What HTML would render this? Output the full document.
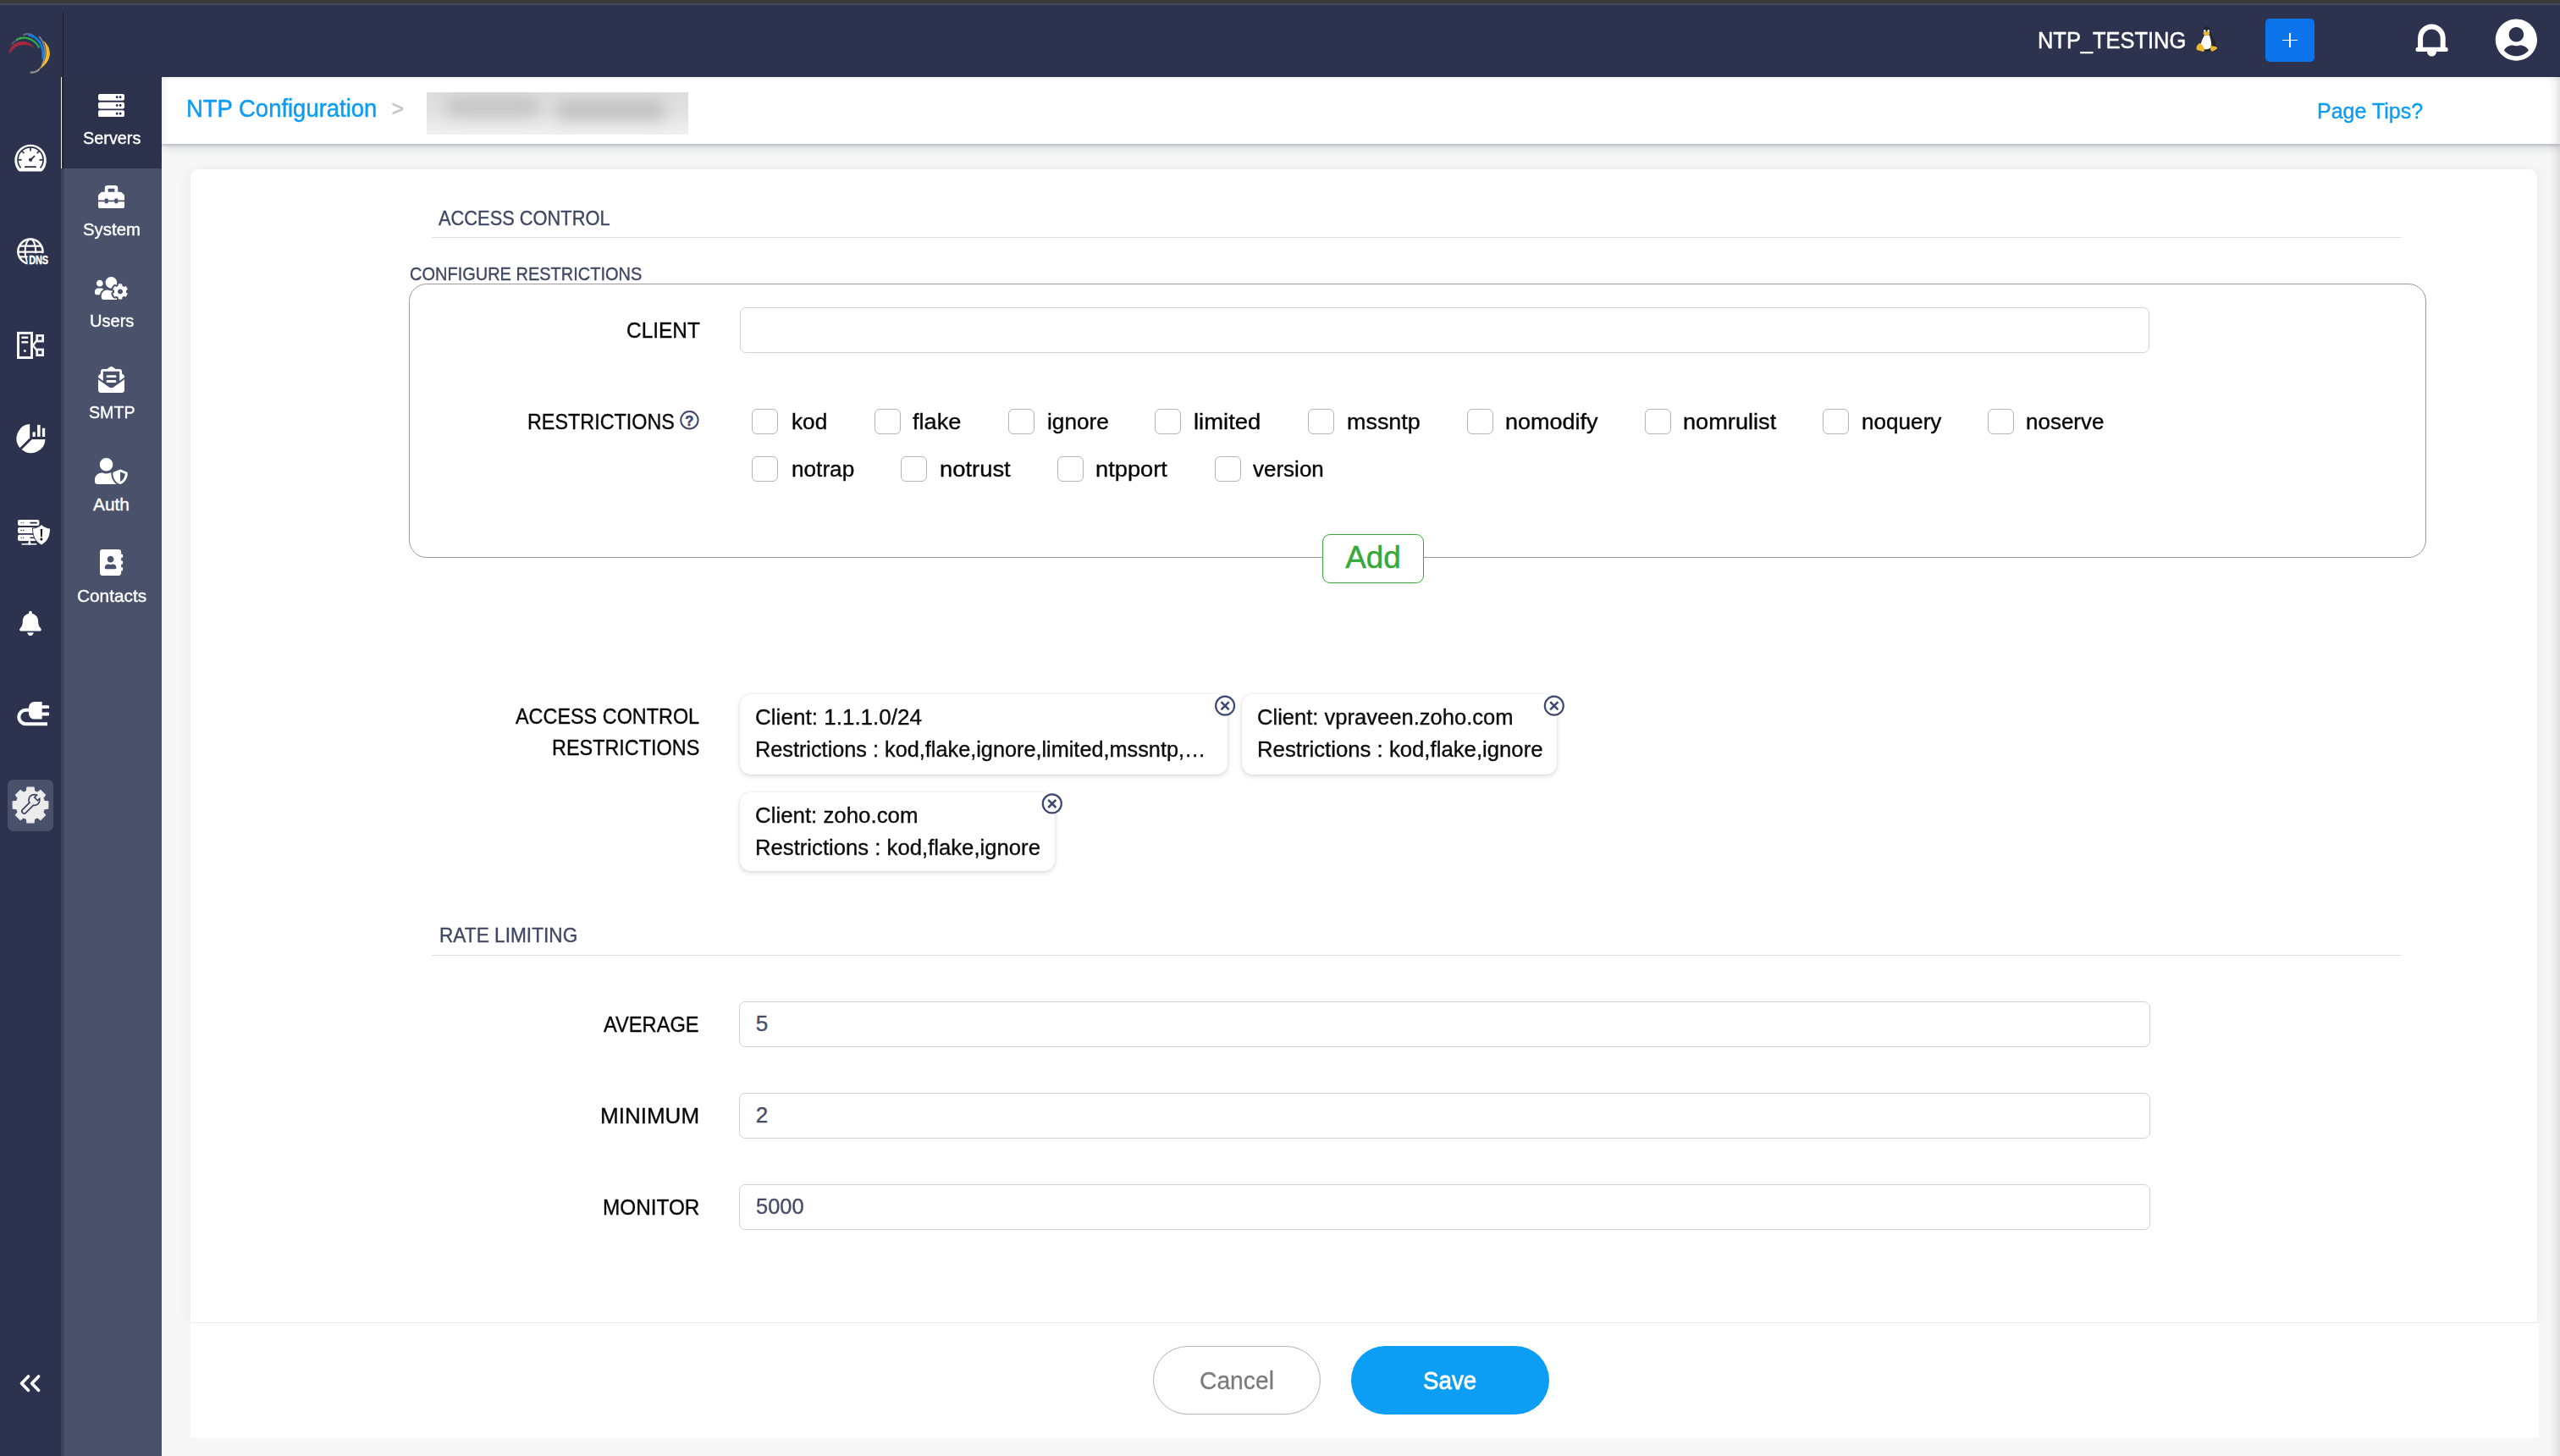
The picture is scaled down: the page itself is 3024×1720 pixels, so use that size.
<!DOCTYPE html>
<html lang="en"><head><meta charset="utf-8"><title>NTP Configuration</title>
<style>
html,body{margin:0;padding:0}
body{width:3024px;height:1720px;position:relative;overflow:hidden;background:#f7f7f7;font-family:"Liberation Sans",sans-serif}
.a{position:absolute;box-sizing:border-box}
.t{position:absolute;white-space:pre;transform-origin:0 50%;font-family:"Liberation Sans",sans-serif}
svg{position:absolute;overflow:visible}
.cb{position:absolute;box-sizing:border-box;width:31px;height:30px;border:1.5px solid #b5b5b5;border-radius:6px;background:#fff}
.inp{position:absolute;box-sizing:border-box;border:1.5px solid #cfd2db;border-radius:7px;background:#fff}
.card{position:absolute;box-sizing:border-box;background:#fff;border-radius:13px;box-shadow:0 2px 6px rgba(0,0,0,.14),0 0 2px rgba(0,0,0,.10)}

</style></head>
<body>
<!-- top strips -->
<div class="a" style="left:0;top:0;width:3024px;height:91px;background:#2d334e"></div>
<div class="a" style="left:0;top:0;width:3024px;height:4px;background:#3a3a3a"></div>
<div class="a" style="left:0;top:4px;width:3024px;height:2px;background:#434757"></div>
<!-- breadcrumb bar -->
<div class="a" id="crumb" style="left:191px;top:91px;width:2833px;height:79px;background:#fff;box-shadow:0 2px 3px rgba(70,80,100,.26),0 6px 10px rgba(60,70,90,.14)"></div>
<div class="a" id="blur" style="left:504px;top:109px;width:309px;height:49.5px;background:linear-gradient(180deg,#dddddd 0%,#e1e1e1 45%,#f1f1f1 100%);overflow:hidden">
  <div class="a" style="left:22px;top:6px;width:112px;height:22px;background:#c3c3c3;filter:blur(9px);border-radius:10px"></div>
  <div class="a" style="left:152px;top:10px;width:130px;height:22px;background:#bebebe;filter:blur(9px);border-radius:10px"></div>
</div>
<div class="a" style="left:191px;top:91px;width:2833px;height:6px;background:linear-gradient(180deg,rgba(0,0,0,.045),rgba(0,0,0,0))"></div>
<div class="a" style="left:191px;top:91px;width:10px;height:79px;background:linear-gradient(90deg,rgba(0,0,0,.04),rgba(0,0,0,0))"></div>
<div class="a" id="redge" style="left:3011px;top:91px;width:13px;height:1629px;background:linear-gradient(90deg,rgba(0,0,0,0),rgba(0,0,0,.035) 45%,rgba(0,0,0,.10))"></div>
<!-- left sidebar -->
<div class="a" id="sb1" style="left:0;top:91px;width:72px;height:1629px;background:#2d334e"></div>
<!-- secondary sidebar -->
<div class="a" id="sb2" style="left:72px;top:91px;width:119px;height:1629px;background:#4a516b"></div>
<div class="a" style="left:72px;top:199px;width:4px;height:1521px;background:linear-gradient(90deg,#3f4354 0,#3f4354 50%,#474d66 100%)"></div>
<div class="a" id="sbact" style="left:72px;top:91px;width:119px;height:108px;background:#2c324c"></div>
<div class="a" style="left:72px;top:91px;width:1.3px;height:108px;background:#ececf0"></div>
<div class="a" style="left:73.7px;top:15px;width:0;height:184px;border-left:1.3px dotted #0a0c14"></div>
<!-- card -->
<div class="a" id="card" style="left:225px;top:200px;width:2772px;height:1363px;background:#fff;border-radius:9px 9px 0 0;box-shadow:-6px 0 14px rgba(0,0,0,.035),6px 0 14px rgba(0,0,0,.035)"></div>
<div class="a" id="foot" style="left:225px;top:1562px;width:2774px;height:136px;background:#fff;border-top:1.5px solid #ebebeb"></div>
<!-- section lines -->
<div class="a" style="left:510px;top:279.5px;width:2327px;height:1.5px;background:#e2e2e2"></div>
<div class="a" style="left:510px;top:1127.5px;width:2327px;height:1.5px;background:#e2e2e2"></div>
<!-- fieldset -->
<div class="a" id="fs" style="left:483px;top:335px;width:2382.5px;height:324px;border:1.5px solid #9a9a9a;border-radius:21px"></div>
<div class="inp" style="left:873.5px;top:362.5px;width:1665.5px;height:54.5px"></div>
<!-- add button -->
<div class="a" id="add" style="left:1562px;top:631px;width:120px;height:58px;background:#fff;border:1.5px solid #38ab3d;border-radius:9px"></div>
<!-- rate inputs -->
<div class="inp" style="left:873px;top:1183px;width:1666.5px;height:54px"></div>
<div class="inp" style="left:873px;top:1291px;width:1666.5px;height:54px"></div>
<div class="inp" style="left:873px;top:1399px;width:1666.5px;height:54px"></div>
<!-- ACL cards -->
<div class="card" style="left:873.5px;top:819.5px;width:576.5px;height:95px"></div>
<div class="card" style="left:1466.5px;top:819.5px;width:372.5px;height:95px"></div>
<div class="card" style="left:873.5px;top:936px;width:372.5px;height:93px"></div>
<!-- buttons -->
<div class="a" id="cancel" style="left:1362px;top:1590px;width:198px;height:81px;border:1.5px solid #b3b3b3;border-radius:41px;background:#fff"></div>
<div class="a" id="save" style="left:1596px;top:1590px;width:234px;height:81px;border-radius:41px;background:#0c9df4"></div>
<!-- plus button -->
<div class="a" id="plus" style="left:2676px;top:22px;width:58px;height:51px;border-radius:5px;background:#0b74ea"></div>
<div class="a" style="left:2704px;top:39px;width:2.2px;height:17px;background:#fff"></div>
<div class="a" style="left:2696px;top:46.9px;width:18px;height:1.3px;background:#fff"></div>
<!-- active gear square -->
<div class="a" style="left:9px;top:921px;width:54px;height:61px;border-radius:7px;background:#4a516b"></div>
<div class="cb" style="left:888px;top:482.8px"></div>
<div class="cb" style="left:1033px;top:482.8px"></div>
<div class="cb" style="left:1191px;top:482.8px"></div>
<div class="cb" style="left:1364.4px;top:482.8px"></div>
<div class="cb" style="left:1545px;top:482.8px"></div>
<div class="cb" style="left:1733px;top:482.8px"></div>
<div class="cb" style="left:1943px;top:482.8px"></div>
<div class="cb" style="left:2153px;top:482.8px"></div>
<div class="cb" style="left:2348px;top:482.8px"></div>
<div class="cb" style="left:888px;top:538.8px"></div>
<div class="cb" style="left:1064.4px;top:538.8px"></div>
<div class="cb" style="left:1249.4px;top:538.8px"></div>
<div class="cb" style="left:1435.3px;top:538.8px"></div>
<!-- ===== secondary sidebar icons (FontAwesome-like) ===== -->
<svg style="left:116.2px;top:109.1px" width="31" height="31" viewBox="0 0 512 512" fill="#fff"><path d="M480 160H32c-17.673 0-32-14.327-32-32V64c0-17.673 14.327-32 32-32h448c17.673 0 32 14.327 32 32v64c0 17.673-14.327 32-32 32zm-48-88c-13.255 0-24 10.745-24 24s10.745 24 24 24 24-10.745 24-24-10.745-24-24-24zm-64 0c-13.255 0-24 10.745-24 24s10.745 24 24 24 24-10.745 24-24-10.745-24-24-24zm112 248H32c-17.673 0-32-14.327-32-32v-64c0-17.673 14.327-32 32-32h448c17.673 0 32 14.327 32 32v64c0 17.673-14.327 32-32 32zm-48-88c-13.255 0-24 10.745-24 24s10.745 24 24 24 24-10.745 24-24-10.745-24-24-24zm-64 0c-13.255 0-24 10.745-24 24s10.745 24 24 24 24-10.745 24-24-10.745-24-24-24zm112 248H32c-17.673 0-32-14.327-32-32v-64c0-17.673 14.327-32 32-32h448c17.673 0 32 14.327 32 32v64c0 17.673-14.327 32-32 32zm-48-88c-13.255 0-24 10.745-24 24s10.745 24 24 24 24-10.745 24-24-10.745-24-24-24zm-64 0c-13.255 0-24 10.745-24 24s10.745 24 24 24 24-10.745 24-24-10.745-24-24-24z"/></svg>
<svg style="left:116.2px;top:217.1px" width="31" height="31" viewBox="0 0 512 512" fill="#fff"><path d="M502.63 214.63l-45.250-45.250c-6-6-14.140-9.370-22.630-9.370H384V80c0-26.510-21.490-48-48-48H176c-26.510 0-48 21.490-48 48v80H77.250c-8.490 0-16.620 3.370-22.630 9.370L9.370 214.630c-6 6-9.370 14.140-9.370 22.630V320h128v-16c0-8.840 7.160-16 16-16h32c8.840 0 16 7.160 16 16v16h128v-16c0-8.840 7.160-16 16-16h32c8.840 0 16 7.160 16 16v16h128v-82.750c0-8.480-3.370-16.620-9.370-22.620zM320 160H192V96h128v64zm64 208c0 8.840-7.160 16-16 16h-32c-8.840 0-16-7.160-16-16v-16H192v16c0 8.840-7.160 16-16 16h-32c-8.840 0-16-7.160-16-16v-16H0v96c0 17.670 14.330 32 32 32h448c17.670 0 32-14.330 32-32v-96H384v16z"/></svg>
<svg style="left:112.4px;top:325.1px" width="38.75" height="31" viewBox="0 0 640 512" fill="#fff"><path d="M610.5 341.3c2.600-14.100 2.600-28.500 0-42.600l25.800-14.900c3-1.700 4.300-5.200 3.300-8.500-6.700-21.600-18.200-41.200-33.200-57.400-2.300-2.500-6-3.100-9-1.400l-25.800 14.900c-10.900-9.300-23.400-16.500-36.900-21.300v-29.800c0-3.400-2.400-6.400-5.700-7.100-22.300-5-45-4.800-66.200 0-3.300.7-5.700 3.700-5.700 7.100v29.800c-13.500 4.800-26 12-36.900 21.300l-25.800-14.900c-2.900-1.700-6.700-1.100-9 1.400-15 16.200-26.500 35.800-33.200 57.400-1 3.300.4 6.800 3.300 8.500l25.800 14.900c-2.600 14.100-2.600 28.500 0 42.600l-25.800 14.900c-3 1.700-4.300 5.200-3.300 8.500 6.700 21.600 18.200 41.100 33.200 57.400 2.300 2.500 6 3.100 9 1.400l25.800-14.900c10.900 9.300 23.400 16.500 36.900 21.300v29.800c0 3.400 2.400 6.400 5.700 7.100 22.300 5 45 4.800 66.200 0 3.300-.7 5.700-3.700 5.700-7.100v-29.800c13.500-4.800 26-12 36.900-21.300l25.800 14.900c2.900 1.700 6.700 1.100 9-1.400 15-16.200 26.500-35.800 33.200-57.400 1-3.300-.4-6.800-3.300-8.500l-25.800-14.900zM496 368.500c-26.800 0-48.500-21.800-48.500-48.500s21.800-48.500 48.500-48.500 48.500 21.800 48.500 48.500-21.700 48.500-48.500 48.500zM96 224c35.300 0 64-28.700 64-64s-28.700-64-64-64-64 28.700-64 64 28.700 64 64 64zm224 32c1.900 0 3.700-.5 5.600-.6 8.300-21.700 20.500-42.100 36.300-59.200 7.400-8 17.900-12.600 28.900-12.600 6.900 0 13.700 1.800 19.600 5.300l7.900 4.600c.8-.5 1.600-.9 2.400-1.400 7-14.600 11.200-30.800 11.200-48 0-61.900-50.100-112-112-112S208 82.100 208 144c0 61.900 50.100 112 112 112zm105.200 194.500c-2.300-1.200-4.600-2.600-6.800-3.900-8.200 4.800-15.300 9.800-27.500 9.800-10.900 0-21.400-4.600-28.900-12.600-18.300-19.800-32.300-43.900-40.200-69.600-10.700-34.500 24.900-49.700 25.800-50.300-.1-2.600-.1-5.200 0-7.800l-7.900-4.600c-3.800-2.200-7-5-9.800-8.100-3.300.2-6.500.6-9.800.6-24.600 0-47.600-6-68.500-16h-8.300C179.600 288 128 339.600 128 403.200V432c0 26.500 21.500 48 48 48h255.400c-3.700-6-6.200-12.800-6.200-20.300v-9.200zM173.100 274.600C161.500 263.100 145.600 256 128 256H64c-35.300 0-64 28.700-64 64v32c0 17.700 14.300 32 32 32h65.900c6.300-47.400 34.900-87.300 75.200-109.400z"/></svg>
<svg style="left:116.2px;top:433.1px" width="31" height="31" viewBox="0 0 512 512" fill="#fff"><path d="M176 216h160c8.840 0 16-7.160 16-16v-16c0-8.840-7.160-16-16-16H176c-8.840 0-16 7.160-16 16v16c0 8.840 7.160 16 16 16zm-16 80c0 8.840 7.160 16 16 16h160c8.840 0 16-7.160 16-16v-16c0-8.840-7.160-16-16-16H176c-8.840 0-16 7.160-16 16v16zm96 121.130c-16.420 0-32.840-5.060-46.860-15.190L0 250.860V464c0 26.510 21.490 48 48 48h416c26.510 0 48-21.490 48-48V250.860L302.860 401.940c-14.020 10.120-30.440 15.190-46.860 15.190zm237.610-254.180c-8.850-6.940-17.240-13.470-29.610-22.810V96c0-26.510-21.490-48-48-48h-77.550c-3.040-2.200-5.870-4.260-9.040-6.560C312.600 29.170 279.200-.35 256 0c-23.200-.35-56.590 29.170-73.410 41.440-3.170 2.300-6 4.360-9.040 6.560H96c-26.510 0-48 21.490-48 48v44.140c-12.370 9.330-20.760 15.870-29.610 22.810A47.995 47.995 0 0 0 0 200.720v10.650l96 69.350V96h320v184.720l96-69.350v-10.650c0-14.740-6.780-28.670-18.390-37.770z"/></svg>
<svg style="left:112.4px;top:541.1px" width="38.75" height="31" viewBox="0 0 640 512" fill="#fff"><path d="M622.3 271.1l-115.200-45c-4.100-1.600-12.600-3.700-22.200 0l-115.200 45c-10.700 4.200-17.700 14-17.700 24.900 0 111.600 68.700 188.800 132.900 213.900 9.600 3.700 18 1.600 22.200 0C558.400 489.900 640 420.500 640 296c0-10.900-7-20.700-17.700-24.900zM496 462.400V273.300l95.500 37.300c-5.600 87.100-60.900 135.400-95.500 151.800zM224 256c70.700 0 128-57.300 128-128S294.700 0 224 0 96 57.300 96 128s57.300 128 128 128zm96 40c0-2.500.8-4.800 1.100-7.200-2.500-.1-4.900-.8-7.500-.8h-16.700c-22.200 10.200-46.900 16-72.900 16s-50.600-5.800-72.900-16h-16.700C60.200 288 0 348.200 0 422.400V464c0 26.500 21.500 48 48 48h352c6.800 0 13.300-1.500 19.200-4-54-42.900-99.200-116.700-99.200-212z"/></svg>
<svg style="left:118.1px;top:649.1px" width="27.1" height="31" viewBox="0 0 448 512" fill="#fff"><path d="M436 160c6.600 0 12-5.400 12-12v-40c0-6.600-5.400-12-12-12h-20V48c0-26.500-21.500-48-48-48H48C21.500 0 0 21.500 0 48v416c0 26.500 21.500 48 48 48h320c26.500 0 48-21.500 48-48v-48h20c6.600 0 12-5.400 12-12v-40c0-6.600-5.400-12-12-12h-20v-64h20c6.600 0 12-5.400 12-12v-40c0-6.600-5.400-12-12-12h-20v-64h20zm-228-32c35.300 0 64 28.700 64 64s-28.700 64-64 64-64-28.700-64-64 28.700-64 64-64zm112 236.800c0 10.600-10 19.200-22.400 19.200H118.400C106 384 96 375.400 96 364.800v-19.200c0-31.800 30.100-57.600 67.200-57.600h5c12.300 5.100 25.700 8 39.800 8s27.600-2.900 39.800-8h5c37.100 0 67.200 25.800 67.200 57.600v19.200z"/></svg>
<svg style="left:0;top:0" width="3024" height="1720" viewBox="0 0 3024 1720">
<g id="logo" fill="none" stroke-linecap="round">
<path d="M28,41 C32,39.4 36,39.8 38.5,41.5" stroke="#646a84" stroke-width="2"/>
<path d="M14,52 C18,47.5 23,45.5 28,45" stroke="#5d6279" stroke-width="1.6"/>
<path d="M46.5,43.5 C53,51 56,63 49.5,77" stroke="#8d91a2" stroke-width="1.6"/>
<path d="M36.5,85.6 C40,85.8 43,84.8 46,82.4" stroke="#8f8f93" stroke-width="2.2"/>
<path d="M10.5,62 C13,48 31,43.5 41.5,57 C32,50.5 18,51.5 12.5,62.5 Z" fill="#a3293d" stroke="none"/>
<path d="M19.8,46.8 C27,42.6 39,44 46,55.7" stroke="#2db83d" stroke-width="2"/>
<path d="M34.3,41.5 C45,43.5 52.5,54 50.6,69" stroke="#0d80f2" stroke-width="2.6"/>
<path d="M51,48 C62,56 63,74 44,83 C56,74 57,58 51,48 Z" fill="#f2bb2e" stroke="none"/>
</g>
<g id="dash">
<path d="M24.5,202.6 Q21.5,202.6 20.2,199.5 A18.75 18.75 0 1 1 51.9,199.5 Q50.5,202.6 47.5,202.6 Z" fill="#fff"/>
<g fill="none" stroke="#2d334e" stroke-width="1.7">
<path d="M24.5,198.4 A15 15 0 1 1 47.6,198.4"/>
<path d="M36.05,174.2 V178.4 M21.3,188.8 H25.6 M46.5,188.8 H50.8 M25.45,178.2 L28.4,181.1 M46.65,178.2 L43.7,181.1 M29,197.2 H42.8"/>
<path d="M36.05,188.8 L41,184.1" stroke-width="1.8"/>
</g>
<circle cx="36.05" cy="188.8" r="2.1" fill="#2d334e"/>
</g>
<g id="dns">
<g fill="none" stroke="#fff">
<circle cx="35.9" cy="297.1" r="14.6" stroke-width="2.5"/>
<ellipse cx="35.9" cy="297.1" rx="6.3" ry="14.6" stroke-width="2.1"/>
<path d="M23.5,290.7 H48.3 M21.3,297.7 H50.5 M23,303.4 H48.8" stroke-width="2.3"/>
</g>
<rect x="32.6" y="299.2" width="28" height="16" fill="#2d334e"/>
<text x="34.2" y="311.7" font-family="Liberation Sans, sans-serif" font-weight="bold" font-size="14.3" fill="#fff" stroke="#fff" stroke-width="0.5" textLength="22.9" lengthAdjust="spacingAndGlyphs">DNS</text>
</g>
<g id="net" fill="none" stroke="#f4f4f4">
<rect x="21.5" y="393.4" width="16" height="29.1" stroke-width="3"/>
<rect x="43.7" y="396.4" width="6.9" height="6.6" stroke-width="2.8"/>
<rect x="43.7" y="413" width="6.9" height="6.6" stroke-width="2.8"/>
<path d="M39,408 L43.5,402 M39,408 L43.5,414" stroke-width="2.2"/>
<path d="M25.4,398.8 H33.2 M25.4,404.2 H33.2" stroke-width="2.4"/>
<circle cx="29.4" cy="414.5" r="1.5" fill="#f4f4f4" stroke="none"/>
</g>
<g id="pie" fill="#fff">
<path d="M35.2,517.3 L35.2,501.05 A17 17 0 0 0 23.6,529 Z"/>
<path d="M37.8,519 L53.5,519 A17 17 0 0 1 25.6,531.1 Z"/>
<rect x="38.5" y="510.3" width="3.3" height="5.6"/><rect x="44.1" y="501.9" width="3.5" height="14"/><rect x="49.9" y="505.8" width="3.3" height="10.1"/>
</g>
<g id="srvsh">
<g fill="#fff"><rect x="21" y="614.1" width="25.4" height="7" rx="2"/><rect x="21" y="623" width="25.4" height="7" rx="2"/><rect x="21" y="631.8" width="25.4" height="7.1" rx="2"/>
<rect x="33.8" y="638.5" width="2" height="4.5"/><rect x="25.6" y="642" width="17.7" height="1.6"/><circle cx="34.8" cy="642" r="1.7"/></g>
<g fill="#2d334e"><circle cx="25" cy="617.6" r=".7"/><circle cx="27.6" cy="617.6" r=".7"/><rect x="35.2" y="616.8" width="8.8" height="1.6" rx=".8"/>
<circle cx="25" cy="626.5" r=".8"/><circle cx="27.8" cy="626.5" r=".8"/>
<circle cx="25" cy="635.3" r=".7"/><circle cx="27.6" cy="635.3" r=".7"/><rect x="35.2" y="634.5" width="8.8" height="1.6" rx=".8"/></g>
<path d="M49,620 C46,623 42,624.4 39,624.5 C39,634 42.5,640 49,643.4 C55.5,640 59,634 59,624.5 C56,624.4 52,623 49,620 Z" fill="#fff" stroke="#2d334e" stroke-width="2" paint-order="stroke"/>
<path d="M47.7,625 H50.1 L49.6,634.6 H48.2 Z" fill="#000"/><circle cx="48.9" cy="637" r="1.5" fill="#000"/>
</g>
<svg x="23.1" y="721.7" width="25.7" height="29.3" viewBox="0 0 448 512"><path fill="#fff" d="M224 512c35.32 0 63.97-28.65 63.97-64H160.030c0 35.350 28.650 64 63.970 64zm215.390-149.710c-19.320-20.760-55.470-51.990-55.470-154.290 0-77.700-54.480-139.900-127.940-155.160V32c0-17.670-14.320-32-31.980-32s-31.980 14.330-31.980 32v20.840C118.560 68.100 64.080 130.300 64.080 208c0 102.300-36.150 133.530-55.470 154.290-6 6.450-8.660 14.160-8.610 21.710.110 16.400 12.980 32 32.100 32h383.800c19.120 0 32-15.600 32.100-32 .050-7.550-2.610-15.270-8.610-21.710z"/></svg>
<g id="plug" fill="#fff">
<path d="M49.7,829 H40.5 A6.5 6.5 0 0 0 34,835.5 V843.1 A6.5 6.5 0 0 0 40.5,849.6 H49.7 Z"/>
<rect x="49" y="833.2" width="9.1" height="3.9" rx="1.4"/><rect x="49" y="841.5" width="9.1" height="3.9" rx="1.4"/>
<path d="M34.5,838.8 H30.5 A8.2 8.2 0 0 0 30.5,855.2 H56" fill="none" stroke="#fff" stroke-width="4.1"/>
</g>
<g id="gear">
<path d="M40.54,934.62 L40.05,930.19 L31.95,930.19 L31.46,934.62 L27.63,936.20 L24.15,933.42 L18.42,939.15 L21.20,942.63 L19.62,946.46 L15.19,946.95 L15.19,955.05 L19.62,955.54 L21.20,959.37 L18.42,962.85 L24.15,968.58 L27.63,965.80 L31.46,967.38 L31.95,971.81 L40.05,971.81 L40.54,967.38 L44.37,965.80 L47.85,968.58 L53.58,962.85 L50.80,959.37 L52.38,955.54 L56.81,955.05 L56.81,946.95 L52.38,946.46 L50.80,942.63 L53.58,939.15 L47.85,933.42 L44.37,936.20 Z" fill="#ececec" stroke="#ececec" stroke-width="1.2" stroke-linejoin="round"/>
<clipPath id="hd"><circle cx="40.4" cy="945.0" r="7.3"/></clipPath>
<g stroke-linecap="round" fill="none">
<path d="M28.6,958.2 L37.6,949.2" stroke="#3d4560" stroke-width="7.2"/>
<circle cx="40.4" cy="945.0" r="5.6" fill="#3d4560" stroke="#3d4560" stroke-width="3.4"/>
<path d="M28.6,958.2 L37.6,949.2" stroke="#ececec" stroke-width="3.7"/>
<circle cx="40.4" cy="945.0" r="5.6" fill="#ececec" stroke="none"/>
<path d="M42.0,944.4 L48.4,938.0" stroke="#3d4560" stroke-width="7" stroke-linecap="butt" clip-path="url(#hd)"/>
<path d="M43.199999999999996,943.2 L49.4,937.0" stroke="#ececec" stroke-width="3.5" stroke-linecap="butt"/>
</g>
</g>
<path d="M33.5,1626 L25.5,1634.2 L33.5,1642.4 M45.6,1626 L37.6,1634.2 L45.6,1642.4" fill="none" stroke="#fff" stroke-width="3.6" stroke-linecap="round" stroke-linejoin="round"/>
<g id="hbell"><path d="M2859.1,57 V44.7 A13.3 13.3 0 0 1 2885.7,44.7 V57" fill="none" stroke="#fff" stroke-width="6"/>
<rect x="2853.5" y="55.8" width="38.2" height="5.3" rx="2.65" fill="#fff"/>
<path d="M2866.9,60.8 A5.6 5.8 0 0 0 2878.1,60.8 Z" fill="#fff"/></g>
<svg x="2947.8" y="21.7" width="49.2" height="50.8" viewBox="0 0 496 512"><path fill="#fff" d="M248 8C111 8 0 119 0 256s111 248 248 248 248-111 248-248S385 8 248 8zm0 96c48.600 0 88 39.400 88 88s-39.400 88-88 88-88-39.400-88-88 39.400-88 88-88zm0 344c-58.700 0-111.300-26.600-146.500-68.200 18.800-35.400 55.600-59.800 98.500-59.800 2.400 0 4.800.4 7.100 1.100 13 4.200 26.600 6.900 40.900 6.900 14.300 0 28-2.700 40.900-6.900 2.300-.7 4.700-1.100 7.100-1.100 42.900 0 79.700 24.400 98.500 59.800C359.300 421.400 306.700 448 248 448z"/></svg>
<g id="tux">
<path d="M2603,36 C2603,32.5 2605,31 2607,31 C2609.5,31 2611,33 2611,36 C2611.3,40 2613,42 2615,45 C2617.5,49 2618,53 2616.5,56 L2612,60.5 H2601 L2598,54 C2599,49 2602,45 2603,41 Z" fill="#25272f"/>
<path d="M2604,41.5 C2602,46 2599.4,50 2599.6,54 C2600,57.5 2603,58.3 2606.5,58.2 C2610,58.1 2612.2,56.5 2612.2,52 C2612,47.5 2610.5,44.5 2610,41.5 Z" fill="#fff"/>
<ellipse cx="2604.4" cy="36.5" rx="1.2" ry="1.5" fill="#fff"/><ellipse cx="2608.7" cy="36.5" rx="1.3" ry="1.5" fill="#fff"/>
<ellipse cx="2606.4" cy="39.6" rx="3.7" ry="2.3" fill="#f0b92d"/>
<path d="M2594.8,55 C2595.5,52.5 2598.5,50.5 2599.5,51 C2601,53 2603,55.5 2604.2,57.5 C2604.5,60 2603,61.2 2601.5,60.8 C2599,60 2596,59.5 2595,58.8 C2594.3,58 2594.5,56.5 2594.8,55 Z" fill="#f0b92d"/>
<path d="M2611.2,53 C2612.5,54.5 2615,55 2616,54.5 C2617.5,55.5 2619.5,56 2619.2,57 C2618,58.5 2615.5,59.5 2614,60.6 C2612.5,61 2611.3,60 2611.2,58.5 Z" fill="#f0b92d"/>
</g>
<g id="help"><circle cx="814.4" cy="496.3" r="10.2" fill="none" stroke="#3d4770" stroke-width="2"/>
<text x="814.4" y="502.8" text-anchor="middle" font-family="Liberation Sans, sans-serif" font-weight="bold" font-size="16.5" fill="#3d4770" stroke="#3d4770" stroke-width="0.5">?</text></g>
<g><circle cx="1447.1" cy="833.7" r="11" fill="#fff" stroke="#3d4770" stroke-width="2.2"/><path d="M1442.5,829.1 L1451.6999999999998,838.3000000000001 M1451.6999999999998,829.1 L1442.5,838.3000000000001" stroke="#3d4770" stroke-width="2.5" fill="none"/></g>
<g><circle cx="1835.8" cy="833.7" r="11" fill="#fff" stroke="#3d4770" stroke-width="2.2"/><path d="M1831.2,829.1 L1840.3999999999999,838.3000000000001 M1840.3999999999999,829.1 L1831.2,838.3000000000001" stroke="#3d4770" stroke-width="2.5" fill="none"/></g>
<g><circle cx="1242.8" cy="949.4" r="11" fill="#fff" stroke="#3d4770" stroke-width="2.2"/><path d="M1238.2,944.8 L1247.3999999999999,954.0 M1247.3999999999999,944.8 L1238.2,954.0" stroke="#3d4770" stroke-width="2.5" fill="none"/></g>
</svg>

<span class="t" style="left:2407.1px;top:32.9px;font-size:28.2px;line-height:28.2px;color:#ffffff;transform:scaleX(0.9019);-webkit-text-stroke:0.5px #ffffff;">NTP_TESTING</span>
<span class="t" style="left:97.6px;top:153.1px;font-size:20.9px;line-height:20.9px;color:#ffffff;transform:scaleX(0.9500);-webkit-text-stroke:0.4px #ffffff;">Servers</span>
<span class="t" style="left:97.6px;top:261.2px;font-size:20.9px;line-height:20.9px;color:#ffffff;transform:scaleX(0.9753);-webkit-text-stroke:0.4px #ffffff;">System</span>
<span class="t" style="left:105.6px;top:369.3px;font-size:20.9px;line-height:20.9px;color:#ffffff;transform:scaleX(0.9605);-webkit-text-stroke:0.4px #ffffff;">Users</span>
<span class="t" style="left:104.6px;top:477.4px;font-size:20.9px;line-height:20.9px;color:#ffffff;transform:scaleX(0.9403);-webkit-text-stroke:0.4px #ffffff;">SMTP</span>
<span class="t" style="left:110.0px;top:585.5px;font-size:20.9px;line-height:20.9px;color:#ffffff;-webkit-text-stroke:0.4px #ffffff;">Auth</span>
<span class="t" style="left:91.0px;top:693.5px;font-size:20.9px;line-height:20.9px;color:#ffffff;transform:scaleX(0.9955);-webkit-text-stroke:0.4px #ffffff;">Contacts</span>
<span class="t" style="left:219.5px;top:113.5px;font-size:28.6px;line-height:28.6px;color:#0c9cf4;transform:scaleX(0.9601);-webkit-text-stroke:0.45px #0c9cf4;">NTP Configuration</span>
<span class="t" style="left:462.6px;top:116.0px;font-size:25px;line-height:25px;color:#c2c2c2;-webkit-text-stroke:0.4px #c2c2c2;">&gt;</span>
<span class="t" style="left:2737.1px;top:119.0px;font-size:25.9px;line-height:25.9px;color:#0c9cf4;transform:scaleX(0.9657);-webkit-text-stroke:0.4px #0c9cf4;">Page Tips?</span>
<span class="t" style="left:518.2px;top:245.6px;font-size:23.8px;line-height:23.8px;color:#3f4762;transform:scaleX(0.9174);-webkit-text-stroke:0.35px #3f4762;">ACCESS CONTROL</span>
<span class="t" style="left:483.9px;top:313.2px;font-size:21.8px;line-height:21.8px;color:#3f4762;transform:scaleX(0.9170);-webkit-text-stroke:0.35px #3f4762;">CONFIGURE RESTRICTIONS</span>
<span class="t" style="left:518.9px;top:1093.3px;font-size:23.8px;line-height:23.8px;color:#3f4762;transform:scaleX(0.9523);-webkit-text-stroke:0.35px #3f4762;">RATE LIMITING</span>
<span class="t" style="left:740.2px;top:376.6px;font-size:26.6px;line-height:26.6px;color:#060606;transform:scaleX(0.9182);-webkit-text-stroke:0.35px #060606;">CLIENT</span>
<span class="t" style="left:622.6px;top:484.7px;font-size:26.6px;line-height:26.6px;color:#060606;transform:scaleX(0.8782);-webkit-text-stroke:0.35px #060606;">RESTRICTIONS</span>
<span class="t" style="left:608.8px;top:832.7px;font-size:26.6px;line-height:26.6px;color:#060606;transform:scaleX(0.8799);-webkit-text-stroke:0.35px #060606;">ACCESS CONTROL</span>
<span class="t" style="left:651.6px;top:870.3px;font-size:26.6px;line-height:26.6px;color:#060606;transform:scaleX(0.8805);-webkit-text-stroke:0.35px #060606;">RESTRICTIONS</span>
<span class="t" style="left:713.4px;top:1196.5px;font-size:26.6px;line-height:26.6px;color:#060606;transform:scaleX(0.8891);-webkit-text-stroke:0.35px #060606;">AVERAGE</span>
<span class="t" style="left:709.0px;top:1304.5px;font-size:26.6px;line-height:26.6px;color:#060606;transform:scaleX(0.9787);-webkit-text-stroke:0.35px #060606;">MINIMUM</span>
<span class="t" style="left:711.6px;top:1412.5px;font-size:26.6px;line-height:26.6px;color:#060606;transform:scaleX(0.9148);-webkit-text-stroke:0.35px #060606;">MONITOR</span>
<span class="t" style="left:934.6px;top:484.7px;font-size:26.6px;line-height:26.6px;color:#060606;transform:scaleX(0.9843);-webkit-text-stroke:0.35px #060606;">kod</span>
<span class="t" style="left:1078.0px;top:484.7px;font-size:26.6px;line-height:26.6px;color:#060606;transform:scaleX(1.0200);-webkit-text-stroke:0.35px #060606;">flake</span>
<span class="t" style="left:1236.5px;top:484.7px;font-size:26.6px;line-height:26.6px;color:#060606;transform:scaleX(0.9849);-webkit-text-stroke:0.35px #060606;">ignore</span>
<span class="t" style="left:1409.9px;top:484.7px;font-size:26.6px;line-height:26.6px;color:#060606;transform:scaleX(1.0317);-webkit-text-stroke:0.35px #060606;">limited</span>
<span class="t" style="left:1590.6px;top:484.7px;font-size:26.6px;line-height:26.6px;color:#060606;transform:scaleX(1.0125);-webkit-text-stroke:0.35px #060606;">mssntp</span>
<span class="t" style="left:1778.0px;top:484.7px;font-size:26.6px;line-height:26.6px;color:#060606;transform:scaleX(1.0151);-webkit-text-stroke:0.35px #060606;">nomodify</span>
<span class="t" style="left:1987.6px;top:484.7px;font-size:26.6px;line-height:26.6px;color:#060606;transform:scaleX(1.0216);-webkit-text-stroke:0.35px #060606;">nomrulist</span>
<span class="t" style="left:2198.7px;top:484.7px;font-size:26.6px;line-height:26.6px;color:#060606;transform:scaleX(0.9824);-webkit-text-stroke:0.35px #060606;">noquery</span>
<span class="t" style="left:2393.2px;top:484.7px;font-size:26.6px;line-height:26.6px;color:#060606;transform:scaleX(0.9775);-webkit-text-stroke:0.35px #060606;">noserve</span>
<span class="t" style="left:934.6px;top:540.5px;font-size:26.6px;line-height:26.6px;color:#060606;transform:scaleX(0.9842);-webkit-text-stroke:0.35px #060606;">notrap</span>
<span class="t" style="left:1109.6px;top:540.5px;font-size:26.6px;line-height:26.6px;color:#060606;transform:scaleX(1.0298);-webkit-text-stroke:0.35px #060606;">notrust</span>
<span class="t" style="left:1294.2px;top:540.5px;font-size:26.6px;line-height:26.6px;color:#060606;transform:scaleX(1.0257);-webkit-text-stroke:0.35px #060606;">ntpport</span>
<span class="t" style="left:1480.3px;top:540.5px;font-size:26.6px;line-height:26.6px;color:#060606;transform:scaleX(0.9774);-webkit-text-stroke:0.35px #060606;">version</span>
<span class="t" style="left:1589.2px;top:640.5px;font-size:36.9px;line-height:36.9px;color:#35a93a;-webkit-text-stroke:0.5px #35a93a;">Add</span>
<span class="t" style="left:891.5px;top:833.9px;font-size:26.2px;line-height:26.2px;color:#0c0c0c;transform:scaleX(0.9955);-webkit-text-stroke:0.35px #0c0c0c;">Client: 1.1.1.0/24</span>
<span class="t" style="left:891.5px;top:872.1px;font-size:26.2px;line-height:26.2px;color:#0c0c0c;transform:scaleX(0.9649);-webkit-text-stroke:0.35px #0c0c0c;">Restrictions : kod,flake,ignore,limited,mssntp,…</span>
<span class="t" style="left:1484.7px;top:833.9px;font-size:26.2px;line-height:26.2px;color:#0c0c0c;transform:scaleX(0.9758);-webkit-text-stroke:0.35px #0c0c0c;">Client: vpraveen.zoho.com</span>
<span class="t" style="left:1484.7px;top:872.1px;font-size:26.2px;line-height:26.2px;color:#0c0c0c;transform:scaleX(0.9827);-webkit-text-stroke:0.35px #0c0c0c;">Restrictions : kod,flake,ignore</span>
<span class="t" style="left:891.5px;top:949.5px;font-size:26.2px;line-height:26.2px;color:#0c0c0c;transform:scaleX(0.9869);-webkit-text-stroke:0.35px #0c0c0c;">Client: zoho.com</span>
<span class="t" style="left:891.5px;top:988.0px;font-size:26.2px;line-height:26.2px;color:#0c0c0c;transform:scaleX(0.9809);-webkit-text-stroke:0.35px #0c0c0c;">Restrictions : kod,flake,ignore</span>
<span class="t" style="left:892.7px;top:1195.8px;font-size:26px;line-height:26px;color:#454c66;-webkit-text-stroke:0.35px #454c66;">5</span>
<span class="t" style="left:892.7px;top:1303.8px;font-size:26px;line-height:26px;color:#454c66;-webkit-text-stroke:0.35px #454c66;">2</span>
<span class="t" style="left:892.7px;top:1411.8px;font-size:26px;line-height:26px;color:#454c66;transform:scaleX(0.9775);-webkit-text-stroke:0.35px #454c66;">5000</span>
<span class="t" style="left:1416.9px;top:1616.3px;font-size:30.2px;line-height:30.2px;color:#7b7b7b;transform:scaleX(0.9357);-webkit-text-stroke:0.3px #7b7b7b;">Cancel</span>
<span class="t" style="left:1681.3px;top:1616.3px;font-size:30.2px;line-height:30.2px;color:#ffffff;transform:scaleX(0.9180);-webkit-text-stroke:0.8px #ffffff;">Save</span>
</body></html>
